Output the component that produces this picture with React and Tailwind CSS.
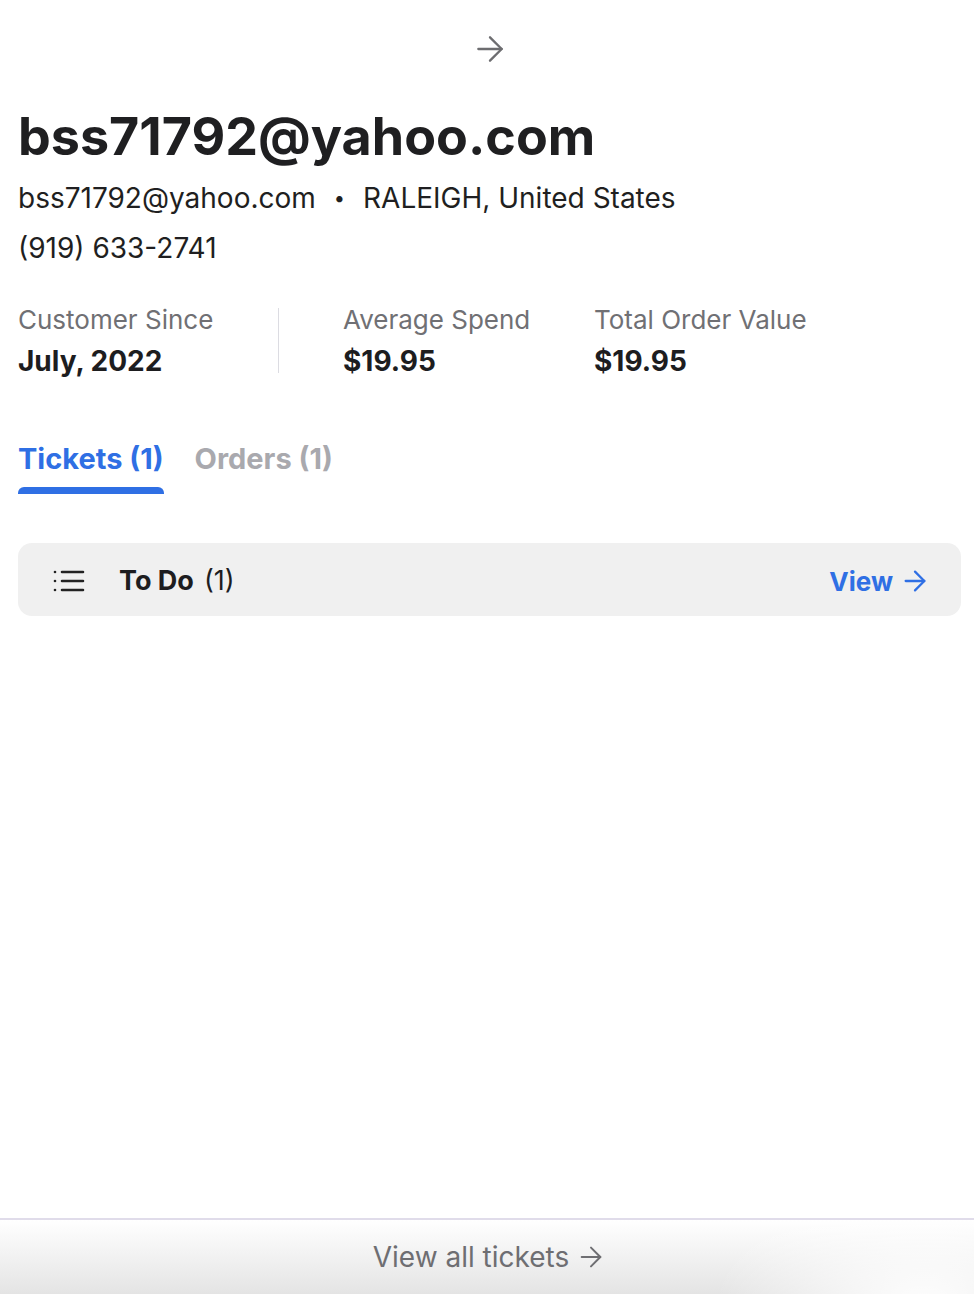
import React from "react";

const Arrow = ({ className, strokeWidth = 2 }) => (
  <svg viewBox="0 0 24 24" fill="none" stroke="currentColor" strokeWidth={strokeWidth} strokeLinecap="round" strokeLinejoin="round" className={className}>
    <path d="M5 12h14" />
    <path d="M12 5l7 7-7 7" />
  </svg>
);

const ListIcon = () => (
  <svg viewBox="0 0 32 24" className="w-[32px] h-[24px]" fill="none" stroke="#222" strokeWidth="2.6" strokeLinecap="round">
    <circle cx="2" cy="3" r="1.3" fill="#222" stroke="none" />
    <circle cx="2" cy="12" r="1.3" fill="#222" stroke="none" />
    <circle cx="2" cy="21" r="1.3" fill="#222" stroke="none" />
    <path d="M9 3h21M9 12h21M9 21h21" />
  </svg>
);

export default function App() {
  return (
    <div className="w-[974px] h-[1294px] bg-white flex flex-col text-[#1d1d1f]" style={{ fontFamily: "Inter, 'Noto Sans', sans-serif" }}>
      <div className="flex-1 flex flex-col pl-[18px] pr-[13px]">
        <div className="flex justify-center pt-[29px]">
          <Arrow className="w-[40px] h-[40px] text-[#6d6d70]" strokeWidth={1.4} />
        </div>
        <h1 className="mt-[37px] text-[52px] font-bold leading-[62px] text-[#1f1f21]">bss71792@yahoo.com</h1>
        <div className="mt-[12px] text-[28px] leading-[36px] flex items-center text-[#1f1f21]">
          <span>bss71792@yahoo.com</span>
          <span className="mx-[18px] text-[20px]">•</span>
          <span>RALEIGH, United States</span>
        </div>
        <div className="mt-[14px] text-[28px] leading-[36px] text-[#1f1f21]">(919) 633-2741</div>

        <div className="mt-[37px] flex">
          <div className="w-[260px] flex flex-col">
            <span className="text-[26px] leading-[34px] text-[#707074] whitespace-nowrap">Customer Since</span>
            <span className="mt-[6px] text-[28px] leading-[36px] font-bold">July, 2022</span>
          </div>
          <div className="w-[1px] h-[65px] bg-[#dcdce2] mt-[5px]" />
          <div className="w-[315px] pl-[64px] flex flex-col">
            <span className="text-[26px] leading-[34px] text-[#707074] whitespace-nowrap">Average Spend</span>
            <span className="mt-[6px] text-[28px] leading-[36px] font-bold">$19.95</span>
          </div>
          <div className="flex flex-col">
            <span className="text-[26px] leading-[34px] text-[#707074] whitespace-nowrap">Total Order Value</span>
            <span className="mt-[6px] text-[28px] leading-[36px] font-bold">$19.95</span>
          </div>
        </div>

        <div className="mt-[60px] flex gap-[31px]">
          <div className="flex flex-col">
            <span className="text-[29px] leading-[40px] font-bold text-[#2f6fe4]">Tickets (1)</span>
            <div className="mt-[8px] h-[7px] rounded-t-[6px] bg-[#2f6fe4]" />
          </div>
          <span className="text-[29px] leading-[40px] font-bold text-[#a9a9ae]">Orders (1)</span>
        </div>

        <div className="mt-[49px] h-[73px] rounded-[14px] bg-[#f0f0f0] flex items-center pl-[35px] pr-[30px] pt-[3px]">
          <ListIcon />
          <span className="ml-[34px] text-[27px] font-bold">To Do</span>
          <span className="ml-[10px] text-[27px]">(1)</span>
          <span className="ml-auto text-[26px] font-bold text-[#2f6fe4]">View</span>
          <Arrow className="ml-[6px] w-[32px] h-[32px] text-[#2f6fe4]" strokeWidth={1.7} />
        </div>
      </div>

      <div className="h-[76px] border-t-2 border-[#e0dcea] relative overflow-hidden bg-gradient-to-b from-white to-[#e4e4e4] flex items-center justify-center pl-[6px]">
        <div className="absolute right-[-160px] top-[-40px] w-[420px] h-[260px] rounded-full" style={{ background: "radial-gradient(closest-side, rgba(255,255,255,1), rgba(255,255,255,0))" }} />
        <span className="relative text-[28px] text-[#6e6e72]">View all tickets</span>
        <Arrow className="relative ml-[6px] w-[32px] h-[32px] text-[#6e6e72]" strokeWidth={1.5} />
      </div>
    </div>
  );
}
